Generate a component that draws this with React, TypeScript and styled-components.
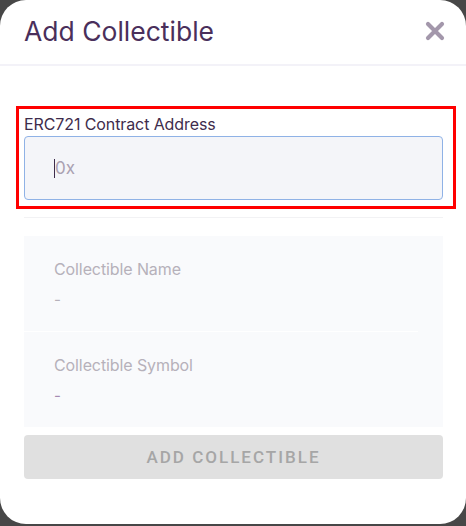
import React from "react";
import styled, { createGlobalStyle } from "styled-components";

const GlobalStyle = createGlobalStyle`
  html, body {
    margin: 0;
    padding: 0;
    background: #474747;
  }
  * {
    box-sizing: border-box;
  }
`;

const Dialog = styled.div`
  width: 466px;
  height: 524px;
  background: #ffffff;
  border-radius: 26px;
  display: flex;
  flex-flow: column;
  font-family: Inter, "Noto Sans", sans-serif;
  overflow: hidden;
`;

const Header = styled.header`
  display: flex;
  align-items: center;
  justify-content: space-between;
  height: 66px;
  padding: 0 21px 2px 24px;
  border-bottom: 2px solid #f3f2f8;
`;

const Title = styled.h2`
  margin: 0;
  font-size: 26.5px;
  font-weight: 400;
  color: #4a2f5b;
`;

const CloseButton = styled.button`
  display: flex;
  padding: 0;
  border: 0;
  background: none;
  cursor: pointer;
`;

const Body = styled.div`
  display: flex;
  flex-flow: column;
  padding: 0 23px 0 24px;
`;

const Highlight = styled.div`
  margin: 40px -13px 0 -8px;
  padding: 5px 10px 6px 5px;
  border: 3px solid #ff0000;
  display: flex;
  flex-flow: column;
`;

const Label = styled.label`
  font-size: 16px;
  line-height: 20px;
  color: #3e2c4c;
  margin-bottom: 2px;
  letter-spacing: -0.1px;
`;

const InputWrap = styled.div`
  position: relative;
`;

const Input = styled.input`
  display: block;
  height: 64px;
  width: 100%;
  padding: 0 30px;
  background: #f4f5f9;
  border: 1px solid #8fb2e6;
  border-radius: 4px;
  font-family: inherit;
  font-size: 17px;
  color: #3e2c4c;
  caret-color: #3e2c4c;
  outline: none;

  &::placeholder {
    color: #aaa1b2;
  }
`;

const Caret = styled.span`
  position: absolute;
  left: 30px;
  top: 23px;
  width: 1px;
  height: 19px;
  background: #3e2c4c;
  pointer-events: none;
`;

const Rule = styled.div`
  height: 1px;
  margin-top: 8px;
  background: #f2f2f4;
`;

const InfoPanel = styled.div`
  margin-top: 18px;
  background: #f9fafc;
  display: flex;
  flex-flow: column;
`;

const InfoRow = styled.div<{ $divided?: boolean }>`
  height: ${(p) => (p.$divided ? "96px" : "95px")};
  padding: 23px 30px 0;
  margin-right: ${(p) => (p.$divided ? "25px" : "0")};
  border-bottom: ${(p) => (p.$divided ? "1px solid #ffffff" : "none")};
  display: flex;
  flex-flow: column;
`;

const InfoLabel = styled.div`
  font-size: 16px;
  line-height: 20px;
  color: #b6b1ba;
  letter-spacing: -0.1px;
`;

const InfoValue = styled.div<{ $tint?: string }>`
  margin-top: 11px;
  font-size: 15px;
  line-height: 20px;
  color: ${(p) => p.$tint || "#b6b1ba"};
`;

const SubmitButton = styled.button`
  margin-top: 8px;
  height: 44px;
  width: 100%;
  border: 0;
  border-radius: 4px;
  background: #e0e0e0;
  color: #a6a6a6;
  font-family: Roboto, "Liberation Sans", sans-serif;
  font-size: 17px;
  font-weight: 500;
  letter-spacing: 2px;
  text-transform: uppercase;
`;

const CloseIcon: React.FC = () => (
  <svg width="20" height="20" viewBox="0 0 20 20">
    <path
      d="M3 3 L17 17 M17 3 L3 17"
      stroke="#a397ab"
      strokeWidth="4.2"
      strokeLinecap="round"
    />
  </svg>
);

const App: React.FC = () => {
  return (
    <>
      <GlobalStyle />
      <Dialog>
        <Header>
          <Title>Add Collectible</Title>
          <CloseButton aria-label="Close">
            <CloseIcon />
          </CloseButton>
        </Header>
        <Body>
          <Highlight>
            <Label htmlFor="address">ERC721 Contract Address</Label>
            <InputWrap>
              <Input id="address" placeholder="0x" />
              <Caret />
            </InputWrap>
          </Highlight>
          <Rule />
          <InfoPanel>
            <InfoRow $divided>
              <InfoLabel>Collectible Name</InfoLabel>
              <InfoValue>-</InfoValue>
            </InfoRow>
            <InfoRow>
              <InfoLabel>Collectible Symbol</InfoLabel>
              <InfoValue $tint="#a58bb2">-</InfoValue>
            </InfoRow>
          </InfoPanel>
          <SubmitButton disabled>Add Collectible</SubmitButton>
        </Body>
      </Dialog>
    </>
  );
};

export default App;
